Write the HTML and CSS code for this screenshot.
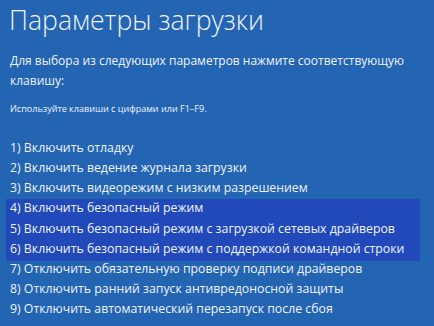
FILE: index.html
```html
<!DOCTYPE html>
<html lang="ru">
<head>
<meta charset="utf-8">
<link rel="stylesheet" href="styles.css">
</head>
<body>
<main class="screen">
  <h1 class="title">Параметры загрузки</h1>
  <p class="lead">Для выбора из следующих параметров нажмите соответствующую клавишу:</p>
  <p class="hint">Используйте клавиши с цифрами или F1–F9.</p>
  <div class="options">
    <div class="opt">1) Включить отладку</div>
    <div class="opt">2) Включить ведение журнала загрузки</div>
    <div class="opt">3) Включить видеорежим с низким разрешением</div>
    <div class="selected">
      <div class="opt">4) Включить безопасный режим</div>
      <div class="opt">5) Включить безопасный режим с загрузкой сетевых драйверов</div>
      <div class="opt">6) Включить безопасный режим с поддержкой командной строки</div>
    </div>
    <div class="opt">7) Отключить обязательную проверку подписи драйверов</div>
    <div class="opt">8) Отключить ранний запуск антивредоносной защиты</div>
    <div class="opt">9) Отключить автоматический перезапуск после сбоя</div>
  </div>
</main>
</body>
</html>
```
FILE: styles.css
```css
html, body {
  margin: 0;
  padding: 0;
  background: #2364b3;
}
body {
  width: 434px;
  height: 326px;
  overflow: hidden;
  font-family: "Open Sans", "Noto Sans", sans-serif;
  color: #eef3fa;
}
.screen {
  padding: 0 0 0 10px;
}
.title {
  margin: 0 0 0 -1px;
  padding-top: 2px;
  font-size: 26.6px;
  font-weight: 300;
  line-height: 36px;
}
.lead {
  margin: 12.5px 0 0 0;
  width: 415px;
  font-size: 12px;
  line-height: 20px;
}
.hint {
  margin: 11px 0 0 0;
  font-size: 9.05px;
  line-height: 14px;
}
.options {
  margin-top: 22.4px;
  font-size: 12.3px;
  line-height: 20.16px;
}
.selected {
  margin-left: -4px;
  padding-left: 4px;
  width: 410px;
  padding-bottom: 2px;
  margin-bottom: -2px;
  background: linear-gradient(to bottom, transparent 1px, #2249b9 1px);
}
.opt {
  white-space: nowrap;
}
```
